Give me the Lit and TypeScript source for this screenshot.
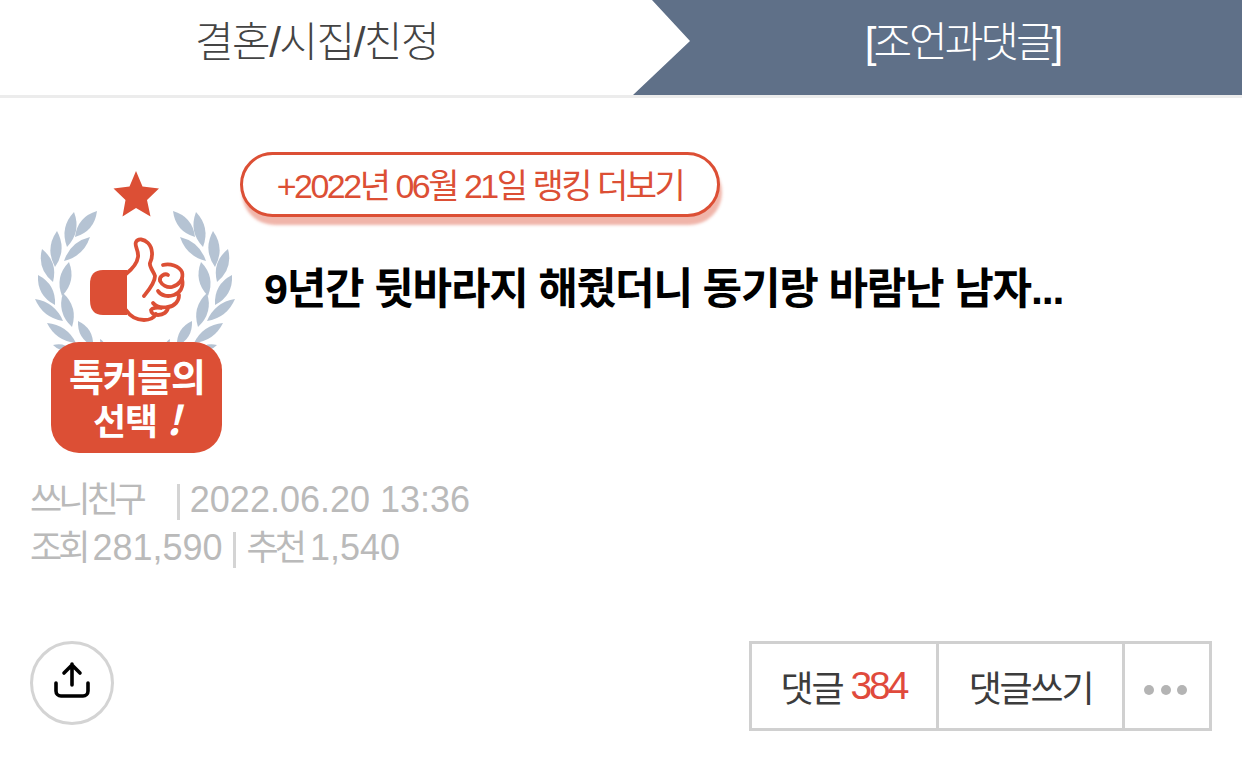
import { LitElement, html, css, svg } from "lit";
import { customElement } from "lit/decorators.js";

const leaves: [number, number, number, number, number][] = [
  [97, 211, 75, 237, 8],
  [74, 212, 67, 247, 8],
  [90, 237, 64, 261, 7],
  [57, 231, 55, 267, 8],
  [42, 249, 53, 282, 8],
  [69, 262, 62, 296, 8],
  [38, 275, 55, 305, 8],
  [63, 293, 72, 327, 8],
  [35, 299, 63, 321, 7],
  [47, 323, 76, 343, 7],
  [78, 321, 93, 346, 7],
  [53, 345, 72, 350, 4],
  [100, 339, 104, 346, 2],
];

function leaf([x1, y1, x2, y2, w]: [number, number, number, number, number]) {
  const mx = (x1 + x2) / 2;
  const my = (y1 + y2) / 2;
  const dx = x2 - x1;
  const dy = y2 - y1;
  const len = Math.hypot(dx, dy);
  const nx = (-dy / len) * w * 1.4;
  const ny = (dx / len) * w * 1.4;
  return svg`<path d="M${x1} ${y1}Q${mx + nx} ${my + ny} ${x2} ${y2}Q${mx - nx} ${my - ny} ${x1} ${y1}Z"/>`;
}

@customElement("app-root")
export class AppRoot extends LitElement {
  static styles = css`
    :host {
      display: block;
      width: 1242px;
      height: 761px;
      background: #fff;
      overflow: hidden;
      font-family: "Liberation Sans", "Noto Sans CJK KR", sans-serif;
    }
    .top {
      display: flex;
      height: 95px;
      border-bottom: 3px solid #ececec;
    }
    .tab {
      display: flex;
      align-items: center;
      justify-content: center;
      font-size: 42px;
      font-weight: 300;
      padding-bottom: 19px;
      box-sizing: border-box;
    }
    .tab.left {
      width: 633px;
      color: #444;
      letter-spacing: -1.5px;
    }
    .tab.right {
      flex: 1;
      color: #fff;
      background: #5f7088;
      clip-path: polygon(19px 0, 100% 0, 100% 100%, 0 100%, 57px 41px);
      padding-left: 50px;
      letter-spacing: -3px;
    }
    .body {
      padding: 54px 30px 0;
    }
    .head {
      display: flex;
      height: 324px;
    }
    .badge {
      width: 210px;
      height: 290px;
      flex: none;
      margin-top: 13px;
    }
    .badge text {
      font-family: "Noto Sans CJK KR", sans-serif;
      font-weight: 700;
      fill: #fff;
    }
    .main {
      display: flex;
      flex-direction: column;
      align-items: flex-start;
    }
    .pill {
      width: 480px;
      height: 65px;
      box-sizing: border-box;
      border: 3px solid #dc4f35;
      border-radius: 33px;
      box-shadow: 2px 8px 3px rgba(220, 79, 53, 0.42);
      background: #fff;
      color: #dc4f35;
      font-size: 34px;
      letter-spacing: -2.5px;
      padding-bottom: 3px;
      display: flex;
      align-items: center;
      justify-content: center;
    }
    .title {
      margin: 44px 0 0 24px;
      font-size: 43px;
      line-height: 56px;
      font-weight: 700;
      color: #000;
      letter-spacing: -1.2px;
      white-space: nowrap;
    }
    .meta {
      color: #bababa;
      font-size: 36px;
      line-height: 48px;
      white-space: nowrap;
    }
    .line {
      display: flex;
    }
    .ko {
      font-size: 35px;
      letter-spacing: -4px;
    }
    .sep {
      width: 3px;
      height: 36px;
      background: #d4d4d4;
      margin-top: 8px;
    }
    .m1 {
      margin-left: 34px;
    }
    .m2 {
      margin-left: 10px;
    }
    .m3 {
      margin-left: 6px;
    }
    .m6 {
      margin-left: 10px;
    }
    .m4 {
      margin-left: 11px;
    }
    .m5 {
      margin-left: 7px;
    }
    .actions {
      display: flex;
      justify-content: space-between;
      align-items: flex-start;
      margin-top: 69px;
    }
    .share {
      width: 84px;
      height: 84px;
      box-sizing: border-box;
      border: 3px solid #d4d4d4;
      border-radius: 50%;
      padding-bottom: 6px;
      display: flex;
      align-items: center;
      justify-content: center;
    }
    .btns {
      display: flex;
      width: 463px;
      height: 90px;
      box-sizing: border-box;
      border: 3px solid #d0d0d0;
      font-size: 36px;
      letter-spacing: -2.2px;
      color: #3c3c3c;
    }
    .btn {
      display: flex;
      align-items: center;
      justify-content: center;
      box-sizing: border-box;
      border-right: 3px solid #d0d0d0;
      gap: 8px;
    }
    .b1 {
      width: 187px;
      padding-right: 1px;
    }
    .b2 {
      width: 186px;
    }
    .b3 {
      flex: 1;
      border-right: 0;
      gap: 6.5px;
      padding-top: 8px;
      padding-right: 3px;
    }
    .num {
      color: #e04a3c;
      font-size: 39px;
      letter-spacing: -3px;
    }
    .dot {
      width: 10px;
      height: 10px;
      border-radius: 50%;
      background: #b4b4b4;
    }
  `;

  render() {
    return html`
      <div class="top">
        <div class="tab left">결혼/시집/친정</div>
        <div class="tab right">[조언과댓글]</div>
      </div>
      <div class="body">
        <div class="head">
          <svg class="badge" viewBox="30 165 210 290">
            <g fill="#b5c3d3">
              ${leaves.map(leaf)}
              <g transform="translate(270 0) scale(-1 1)">${leaves.map(leaf)}</g>
            </g>
            <path
              fill="#dc4f35"
              d="M136 171L142.500 186.500 159 188.500 147 200 150.500 216.500 136 208 122.500 216.500 125.500 200 113.500 188.500 129.500 186.500Z"
            />
            <path fill="#dc4f35" d="M127 270H103Q90 270 90 284V300Q90 315 103 315H127Z" />
            <g fill="none" stroke="#dc4f35" stroke-width="3.800" stroke-linecap="round" stroke-linejoin="round">
              <path
                d="M126 274C131 270 137 264 138 257C139 250 134 246 136 242C138 238 144 239 148 243C153 248 153 257 150 263C149 267 154 272 155 276C155 283 148 291 144 296"
              />
              <path d="M126 310C130 316 136 320 144 320C150 320 154 318 156 314" />
              <path d="M163 265C170 263 179 266 182 272C184 279 179 285 172 287C167 288 162 285 160 281C159 276 165 273 168 275" />
              <path d="M182 279C184 287 180 293 174 295C168 297 161 296 158 291" />
              <path d="M179 295C179 301 175 306 168 307C162 308 156 307 153 303" />
              <path d="M168 307C168 312 163 315 158 315C154 315 151 313 151 310C152 308 157 307 161 308" />
            </g>
            <rect x="51" y="342" width="171" height="111" rx="28" fill="#dc4f35" />
            <text x="137" y="391" font-size="38" text-anchor="middle" letter-spacing="-1">톡커들의</text>
            <text x="93" y="435" font-size="36" letter-spacing="-1">선택<tspan dx="9" font-size="40" font-style="italic">!</tspan></text>
          </svg>
          <div class="main">
            <div class="pill">+2022년 06월 21일 랭킹 더보기</div>
            <div class="title">9년간 뒷바라지 해줬더니 동기랑 바람난 남자...</div>
          </div>
        </div>
        <div class="meta">
          <div class="line"><span class="ko">쓰니친구</span><i class="sep m1"></i><span class="m2">2022.06.20 13:36</span></div>
          <div class="line"><span class="ko">조회</span><span class="m3">281,590</span><i class="sep m6"></i><span class="ko m4">추천</span><span class="m5">1,540</span></div>
        </div>
        <div class="actions">
          <div class="share">
            <svg width="38" height="38" viewBox="0 0 38 38" fill="none" stroke="#000" stroke-width="3.600" stroke-linecap="round" stroke-linejoin="round">
              <path d="M19 24V3M11 12l8-8 8 8" />
              <path d="M3 22v8a5 5 0 0 0 5 5h22a5 5 0 0 0 5-5v-8" />
            </svg>
          </div>
          <div class="btns">
            <div class="btn b1"><span>댓글</span><span class="num">384</span></div>
            <div class="btn b2">댓글쓰기</div>
            <div class="btn b3"><i class="dot"></i><i class="dot"></i><i class="dot"></i></div>
          </div>
        </div>
      </div>
    `;
  }
}
